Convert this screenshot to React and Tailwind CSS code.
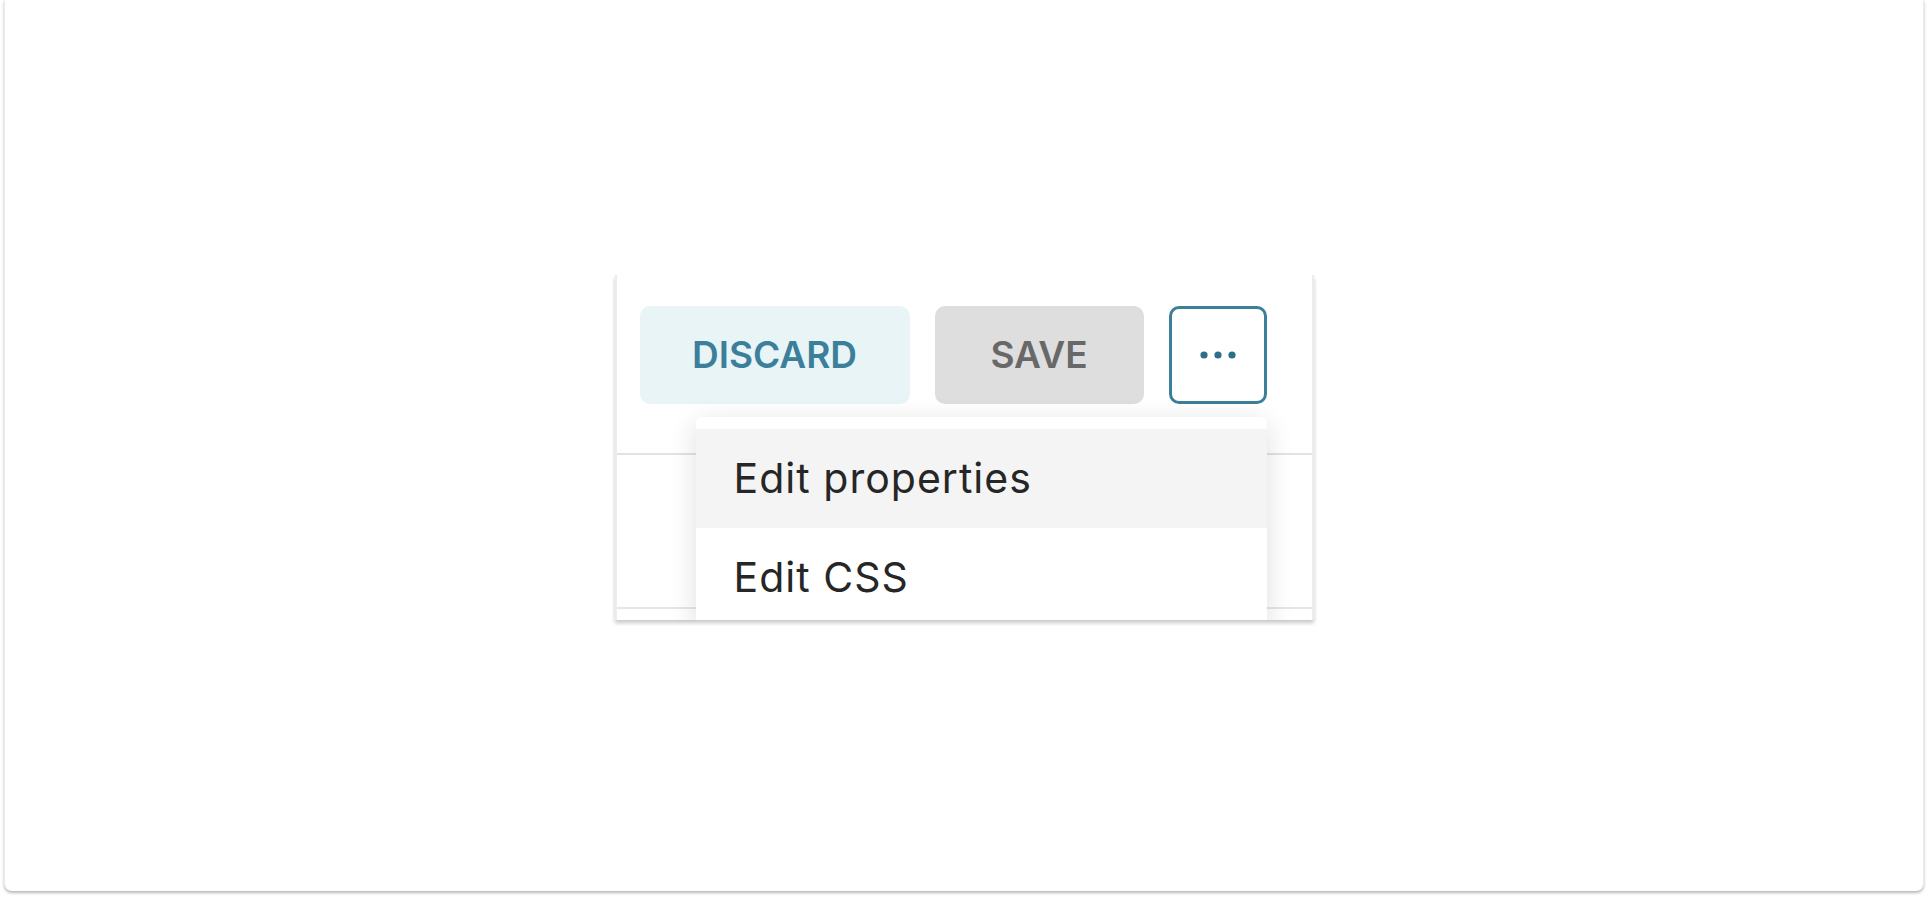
import React from "react";

const MENU_ITEMS = [
  { label: "Edit properties", active: true },
  { label: "Edit CSS", active: false },
];

function DotsIcon() {
  return (
    <svg width="36" height="10" viewBox="0 0 36 10" aria-hidden="true">
      <circle cx="4" cy="5" r="3.6" fill="#2f6e88" />
      <circle cx="18" cy="5" r="3.6" fill="#2f6e88" />
      <circle cx="32" cy="5" r="3.6" fill="#2f6e88" />
    </svg>
  );
}

export default function App() {
  return (
    <div className="h-[899px] w-full bg-white" style={{ fontFamily: "Inter, 'Noto Sans', sans-serif" }}>
      <div className="mx-[4px] h-[891px] rounded-b-lg bg-white shadow-[0_2px_3px_rgba(0,0,0,0.28)] border-x border-[#ececec] pt-[275px]">
        {/* ── PANEL ─────────────────────────────────────── */}
        <div className="relative mx-auto h-[345px] w-[699px] overflow-hidden border-x-2 border-[#ececec] bg-white shadow-[0_3px_4px_rgba(0,0,0,0.22)]">
          <div className="h-[180px] border-b-2 border-[#e2e2e2] pl-[23px] pt-[31px]">
            <div className="flex items-center gap-[25px]">
              <button className="flex h-[98px] w-[270px] items-center justify-center rounded-[10px] bg-[#e9f4f7] text-[37px] font-semibold text-[#3b7f9b]">
                DISCARD
              </button>
              <button className="flex h-[98px] w-[209px] items-center justify-center rounded-[10px] bg-[#dedede] text-[37px] font-semibold text-[#686868]">
                SAVE
              </button>
              <button className="flex h-[98px] w-[98px] items-center justify-center rounded-[10px] border-[3px] border-[#3b7f9b] bg-white">
                <DotsIcon />
              </button>
            </div>
          </div>
          <div className="h-[154px] border-b-2 border-[#e6e6e6]" />

          {/* ── DROPDOWN MENU ──────────────────────────── */}
          <div className="absolute left-[79px] top-[142px] w-[571px] rounded-t-md bg-white pt-[12px] shadow-[0_6px_28px_rgba(0,0,0,0.13)]">
            {MENU_ITEMS.map((item) => (
              <div
                key={item.label}
                className={`flex h-[99px] items-center pl-[38px] text-[41px] tracking-[0.025em] text-[#262626] ${item.active ? "bg-[#f4f4f4]" : "bg-white"}`}
              >
                {item.label}
              </div>
            ))}
          </div>
        </div>
      </div>
    </div>
  );
}
